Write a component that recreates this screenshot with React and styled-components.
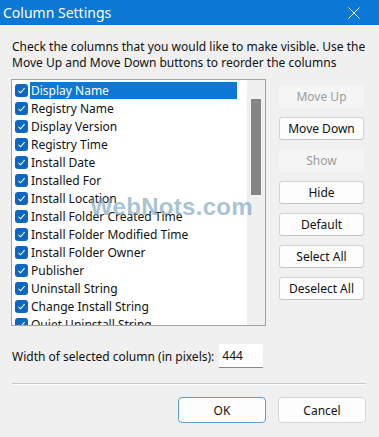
import React from "react";
import styled, { createGlobalStyle } from "styled-components";

const GlobalStyle = createGlobalStyle`
  html, body {
    margin: 0;
    padding: 0;
    background: #f0f0f0;
  }
  body {
    font-family: "Noto Sans", "Open Sans", Arial, sans-serif;
    color: #000;
  }
`;

const columns = [
  "Display Name",
  "Registry Name",
  "Display Version",
  "Registry Time",
  "Install Date",
  "Installed For",
  "Install Location",
  "Install Folder Created Time",
  "Install Folder Modified Time",
  "Install Folder Owner",
  "Publisher",
  "Uninstall String",
  "Change Install String",
  "Quiet Uninstall String",
];

const sideButtons = [
  { label: "Move Up", disabled: true },
  { label: "Move Down" },
  { label: "Show", disabled: true },
  { label: "Hide" },
  { label: "Default" },
  { label: "Select All" },
  { label: "Deselect All" },
];

const CheckIcon = () => (
  <svg width="9" height="9" viewBox="0 0 9 9">
    <path d="M1.5 4.8 L3.6 6.8 L7.6 2.2" fill="none" stroke="#fff" strokeWidth="1.1" />
  </svg>
);

const CloseIcon = () => (
  <svg width="12" height="12" viewBox="0 0 12 12">
    <path d="M0.5 0.5 L11.5 11.5 M11.5 0.5 L0.5 11.5" stroke="#fff" strokeWidth="1" />
  </svg>
);

const App = () => {
  return (
    <Window>
      <GlobalStyle />
      <TitleBar>
        <span>Column Settings</span>
        <CloseButton>
          <CloseIcon />
        </CloseButton>
      </TitleBar>
      <Body>
        <Intro>
          Check the columns that you would like to make visible. Use the
          <br />
          Move Up and Move Down buttons to reorder the columns
        </Intro>
        <MainRow>
          <ListBox>
            <Rows>
              {columns.map((name, i) => (
                <Row key={name}>
                  <Box>
                    <CheckIcon />
                  </Box>
                  <Label $selected={i === 0}>{name}</Label>
                </Row>
              ))}
            </Rows>
            <ScrollTrack>
              <Thumb />
            </ScrollTrack>
          </ListBox>
          <SideButtons>
            {sideButtons.map((b) => (
              <Button key={b.label} $disabled={b.disabled}>
                {b.label}
              </Button>
            ))}
          </SideButtons>
        </MainRow>
        <WidthRow>
          <span>Width of selected column (in pixels):</span>
          <WidthInput>444</WidthInput>
        </WidthRow>
        <Separator />
        <Footer>
          <DialogButton $primary>OK</DialogButton>
          <DialogButton>Cancel</DialogButton>
        </Footer>
      </Body>
      <Watermark>WebNots.com</Watermark>
    </Window>
  );
};

export default App;

const Window = styled.div`
  position: relative;
  width: 379px;
  height: 437px;
  background: #f0f0f0;
  overflow: hidden;
`;

const TitleBar = styled.div`
  height: 25px;
  background: #0a78d4;
  color: #fff;
  display: flex;
  align-items: center;
  justify-content: space-between;
  padding-left: 3px;
  font-size: 14px;
  line-height: 25px;
`;

const CloseButton = styled.div`
  width: 46px;
  height: 25px;
  display: flex;
  align-items: center;
  justify-content: center;
  margin-right: 2px;
`;

const Body = styled.div`
  padding: 14px 12px 0 12px;
`;

const Intro = styled.div`
  font-size: 12px;
  line-height: 16px;
  color: #111;
`;

const MainRow = styled.div`
  display: flex;
  margin-top: 8px;
  margin-left: -1px;
`;

const ListBox = styled.div`
  width: 253px;
  height: 245px;
  border: 1px solid #a3a3a3;
  background: #fff;
  display: flex;
`;

const Rows = styled.div`
  flex: 1;
  overflow: hidden;
  padding-top: 1px;
`;

const Row = styled.div`
  display: flex;
  align-items: center;
  height: 18px;
  padding-left: 3px;
`;

const Box = styled.div`
  width: 13px;
  height: 13px;
  border-radius: 3px;
  background: #0b67c2;
  display: flex;
  align-items: center;
  justify-content: center;
  flex-shrink: 0;
  margin-right: 2px;
`;

const Label = styled.div`
  width: 206px;
  height: 17px;
  padding-left: 1px;
  font-size: 12px;
  line-height: 17px;
  white-space: nowrap;
  background: ${(p) => (p.$selected ? "#0a78d4" : "transparent")};
  color: ${(p) => (p.$selected ? "#fff" : "#111")};
`;

const ScrollTrack = styled.div`
  width: 18px;
  background: #f0f0f0;
  padding-top: 19px;
  display: flex;
  justify-content: center;
`;

const Thumb = styled.div`
  width: 10px;
  height: 96px;
  background: #858585;
`;

const SideButtons = styled.div`
  display: flex;
  flex-direction: column;
  gap: 9px;
  margin-left: 13px;
  padding-top: 6px;
`;

const Button = styled.div`
  width: 85px;
  height: 23px;
  box-sizing: border-box;
  display: flex;
  align-items: center;
  justify-content: center;
  font-size: 12px;
  border-radius: 3px;
  background: ${(p) => (p.$disabled ? "#f5f5f5" : "#fdfdfd")};
  border: 1px solid ${(p) => (p.$disabled ? "#f5f5f5" : "#d4d4d4")};
  border-bottom-color: ${(p) => (p.$disabled ? "#f5f5f5" : "#c4c4c4")};
  color: ${(p) => (p.$disabled ? "#9d9d9d" : "#111")};
`;

const WidthRow = styled.div`
  display: flex;
  align-items: center;
  gap: 5px;
  margin-top: 18px;
  font-size: 12px;
  color: #111;
`;

const WidthInput = styled.div`
  width: 44px;
  height: 24px;
  box-sizing: border-box;
  background: #fff;
  border-bottom: 1px solid #8a8a8a;
  padding: 3px 0 0 3px;
  font-size: 12px;
`;

const Separator = styled.div`
  margin-top: 15px;
  height: 0;
  border-top: 1px solid #c8c8c8;
  border-bottom: 1px solid #fff;
  width: 354px;
`;

const Footer = styled.div`
  display: flex;
  justify-content: flex-end;
  gap: 12px;
  margin-top: 12px;
  padding-right: 1px;
`;

const DialogButton = styled.div`
  width: 88px;
  height: 26px;
  box-sizing: border-box;
  display: flex;
  align-items: center;
  justify-content: center;
  font-size: 12px;
  border-radius: 4px;
  background: #fdfdfd;
  border: 1px solid ${(p) => (p.$primary ? "#5a9bd8" : "#d6d6d6")};
  color: #111;
`;

const Watermark = styled.div`
  position: absolute;
  left: 90px;
  top: 193px;
  font-family: "Liberation Sans", Arial, sans-serif;
  font-weight: bold;
  font-size: 24px;
  letter-spacing: 0.3px;
  color: rgba(110, 155, 180, 0.6);
  pointer-events: none;
`;
